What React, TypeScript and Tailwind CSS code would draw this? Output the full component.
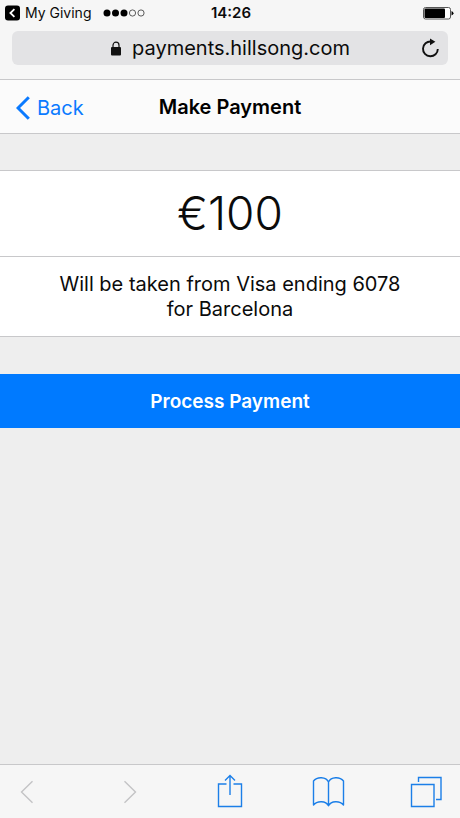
import type { ReactNode } from "react";

function StatusBar() {
  return (
    <div className="grid h-6 grid-cols-3 items-center px-1 pt-0.5 text-[14px] leading-5">
      <div className="flex items-center whitespace-nowrap">
        <button type="button" className="flex items-center gap-1">
          <svg width="17" height="16" viewBox="0 0 17 16" aria-hidden="true">
            <rect x="1" y="0.5" width="15" height="15" rx="3" fill="#000" />
            <path d="M10.4 4.2 6.4 8l4 3.8" fill="none" stroke="#fff" strokeWidth="1.8" />
          </svg>
          <span>My Giving</span>
        </button>
        <svg className="ml-3 shrink-0" width="42" height="8" viewBox="0 0 42 8" role="img" aria-label="Signal strength">
          <circle cx="4" cy="4" r="3.5" />
          <circle cx="12.5" cy="4" r="3.5" />
          <circle cx="21" cy="4" r="3.5" />
          <circle cx="29.5" cy="4" r="3.1" fill="none" stroke="#333" strokeWidth="0.8" />
          <circle cx="38" cy="4" r="3.1" fill="none" stroke="#333" strokeWidth="0.8" />
        </svg>
      </div>
      <time className="pl-0.5 text-center text-[15px] font-semibold">14:26</time>
      <svg className="mr-0.5 justify-self-end" width="31" height="13" viewBox="0 0 31 13" role="img" aria-label="Battery">
        <rect x="0.5" y="0.5" width="27" height="11.5" rx="2" fill="#fff" stroke="#555" />
        <rect x="1.5" y="1.5" width="20.5" height="9.5" rx="1" fill="#000" />
        <path d="M28.5 4v4.5q2-.6 2-2.2T28.5 4Z" fill="#000" />
      </svg>
    </div>
  );
}

function AddressBar() {
  return (
    <div className="mx-3 mt-[7px] flex h-[34px] items-center rounded-md bg-[#e3e3e5] px-1.5">
      <div className="w-6" />
      <div className="flex flex-1 items-center justify-center gap-2.5 text-xl leading-6">
        <svg width="12" height="15" viewBox="0 0 12 15" aria-hidden="true">
          <rect x="1" y="6" width="10" height="8.5" rx="1" fill="#111" />
          <path d="M3 6.500V4.200a3 3 0 0 1 6 0V6.500" fill="none" stroke="#111" strokeWidth="1.2" />
        </svg>
        <span>payments.hillsong.com</span>
      </div>
      <button type="button" aria-label="Reload" className="flex w-6 justify-center">
        <svg width="20" height="20" viewBox="0 0 20 20" aria-hidden="true">
          <path d="M11 3.5A7.4 7.4 0 1 0 17.8 10.9" fill="none" stroke="#111" strokeWidth="1.9" />
          <path d="M10 .4 15.4 3.7 10 7.2Z" fill="#111" />
        </svg>
      </button>
    </div>
  );
}

function ToolButton({ label, disabled, children }: { label: string; disabled?: boolean; children: ReactNode }) {
  return (
    <button type="button" aria-label={label} disabled={disabled} className="flex h-10 w-10 items-center justify-center">
      <svg
        width="40"
        height="36"
        viewBox="0 0 40 36"
        fill="none"
        stroke={disabled ? "#c3c3c5" : "#1c7fe8"}
        strokeWidth="1.4"
        aria-hidden="true"
      >
        {children}
      </svg>
    </button>
  );
}

export default function App() {
  return (
    <div className="flex min-h-screen flex-col bg-[#eeeeee] font-['Inter','Liberation_Sans',sans-serif] text-[#0b0b0b]">
      <header className="h-20 border-b border-[#c8c8ca] bg-[#f6f6f6]">
        <StatusBar />
        <AddressBar />
      </header>

      <nav className="grid h-[54px] grid-cols-[1fr_auto_1fr] items-center border-b border-[#c8c8ca] bg-[#fbfbfb] px-4">
        <a href="#back" className="flex items-center gap-1.5 justify-self-start pt-0.5 text-xl leading-6 text-[#0a7aff]">
          <svg width="15" height="24" viewBox="0 0 15 24" fill="none" aria-hidden="true">
            <path d="M12.8 1.2 2 12l10.800 10.800" stroke="#0a7aff" strokeWidth="3" />
          </svg>
          <span>Back</span>
        </a>
        <h1 className="text-xl leading-6 font-semibold text-black">Make Payment</h1>
      </nav>

      <main className="flex-1">
        <section className="mt-9 border-y border-[#c8c8ca] bg-white text-center">
          <p className="border-b border-[#c8c8ca] py-3.5 text-[46px] leading-[57px] font-light">€100</p>
          <p className="mx-auto max-w-[400px] px-6 pt-[15px] pb-[14px] text-xl leading-[25px]">
            Will be taken from Visa ending 6078 for Barcelona
          </p>
        </section>
        <button type="button" className="mt-[37px] h-[54px] w-full bg-[#007aff] pt-0.5 text-[19px] font-semibold text-white">
          Process Payment
        </button>
      </main>

      <footer className="flex h-[54px] items-center justify-between border-t border-[#c8c8ca] bg-[#f6f6f6] pr-3.5 pl-1.5">
        <ToolButton label="Previous page" disabled>
          <path d="M26.5 7.2 15.5 18l11 10.800" />
        </ToolButton>
        <ToolButton label="Next page" disabled>
          <path d="M18.5 7.2l11 10.800-11 10.800" />
        </ToolButton>
        <ToolButton label="Share">
          <path d="M20.5 10H12.500V32.500H35.500V10H27.500M24 21V1.500M19 6.500l5-5 5 5" />
        </ToolButton>
        <ToolButton label="Bookmarks">
          <path
            d="M22.5 8C20 2.500 11 2.500 7.500 7V31C11 26.500 20 26.500 22.500 31.800C25 26.500 34 26.500 37.500 31V7C34 2.500 25 2.500 22.500 8V31.800"
            strokeLinejoin="round"
          />
        </ToolButton>
        <ToolButton label="Tabs">
          <path d="M5.500 10.500H28V32.500H5.500ZM12.500 8V3.500H35V25.500H30" />
        </ToolButton>
      </footer>
    </div>
  );
}
